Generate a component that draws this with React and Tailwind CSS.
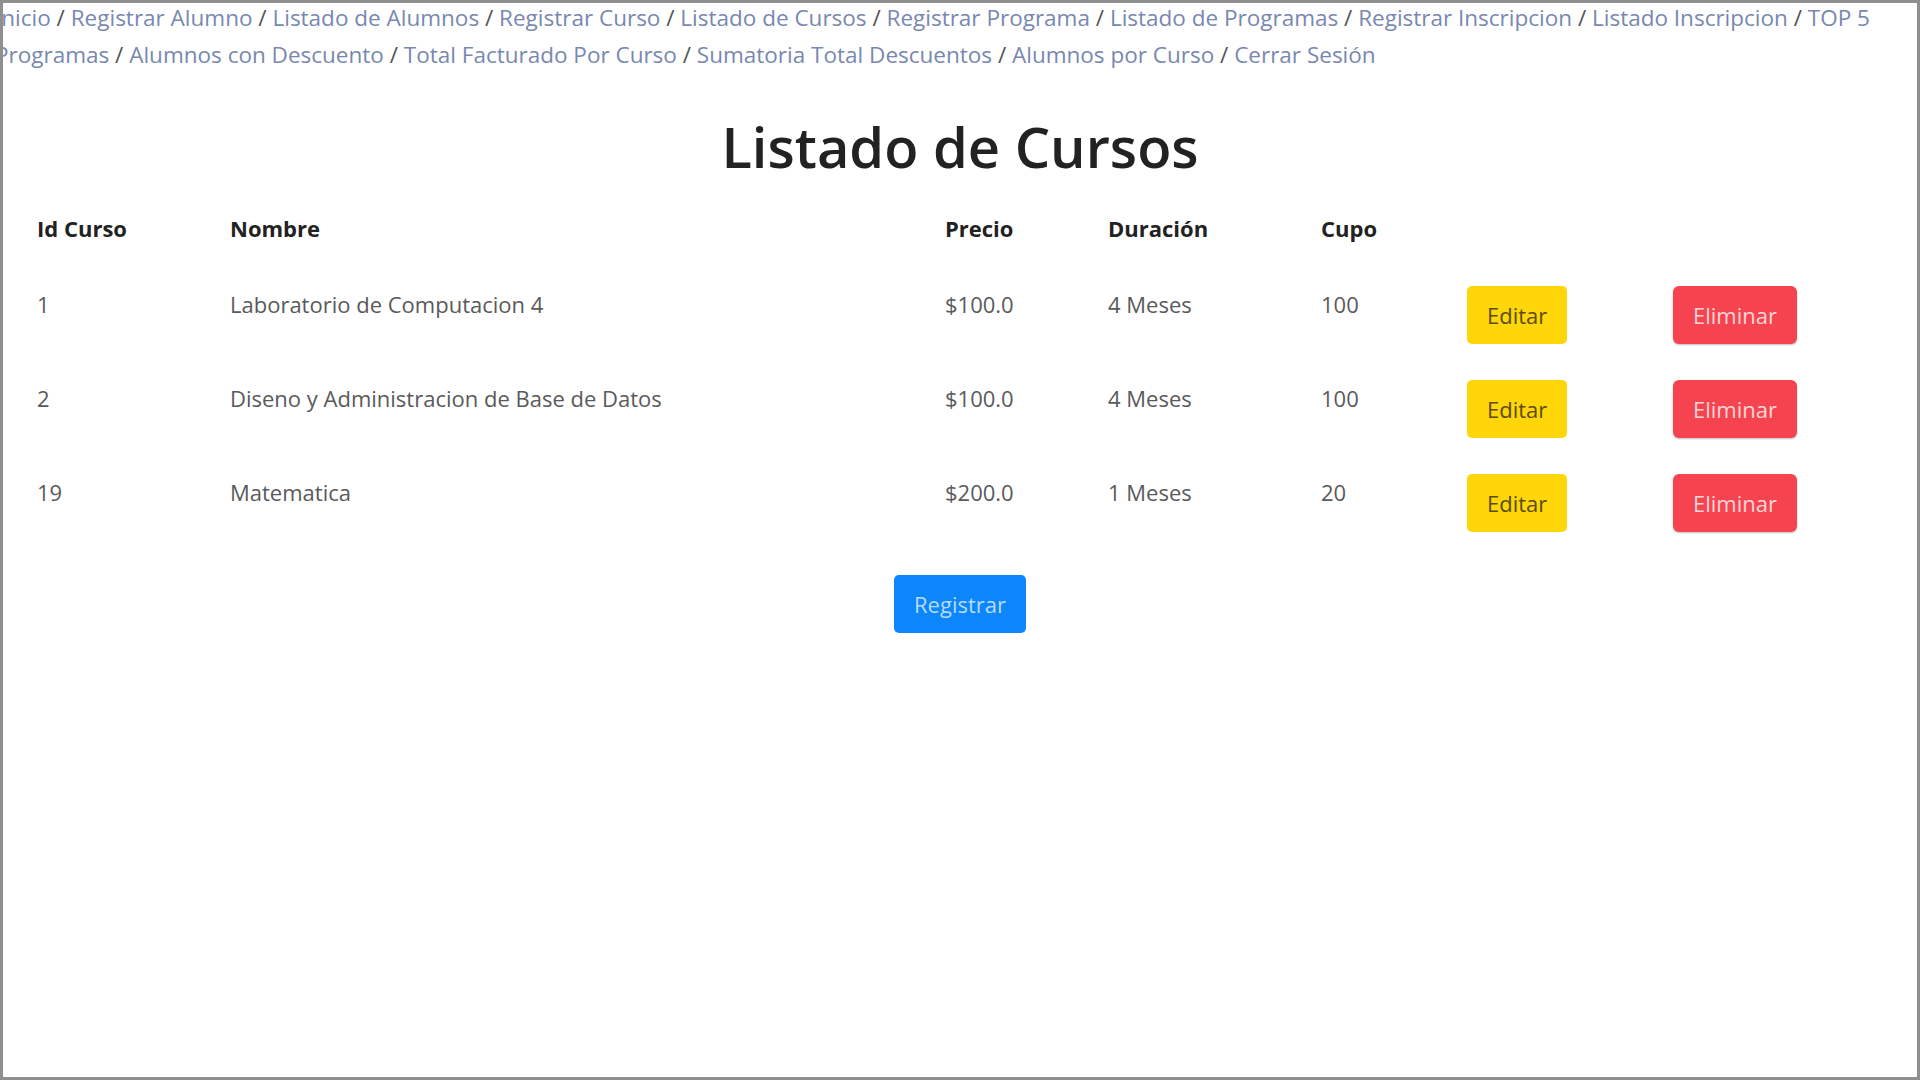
import React from "react";

const linksTop = [
  "Inicio",
  "Registrar Alumno",
  "Listado de Alumnos",
  "Registrar Curso",
  "Listado de Cursos",
  "Registrar Programa",
  "Listado de Programas",
  "Registrar Inscripcion",
  "Listado Inscripcion",
  "TOP 5",
];

const linksBottom = [
  "Programas",
  "Alumnos con Descuento",
  "Total Facturado Por Curso",
  "Sumatoria Total Descuentos",
  "Alumnos por Curso",
  "Cerrar Sesión",
];

const cursos = [
  { id: 1, nombre: "Laboratorio de Computacion 4", precio: "$100.0", duracion: "4 Meses", cupo: 100 },
  { id: 2, nombre: "Diseno y Administracion de Base de Datos", precio: "$100.0", duracion: "4 Meses", cupo: 100 },
  { id: 19, nombre: "Matematica", precio: "$200.0", duracion: "1 Meses", cupo: 20 },
];

// una linea del menu, el link "TOP 5 Programas" queda partido entre las dos
const NavLine = ({ items }) => (
  <div className="whitespace-nowrap h-[37px] leading-[37px]">
    {items.map((item, i) => (
      <span key={item}>
        {i > 0 && <span className="text-[#555]"> / </span>}
        <a className="text-[#7888b0]">{item}</a>
      </span>
    ))}
  </div>
);

export default function App() {
  return (
    <div
      className="w-[1920px] h-[1080px] border-[3px] border-[#8f8f8f] bg-white overflow-hidden text-[#222]"
      style={{ fontFamily: "'Open Sans', 'Noto Sans', sans-serif" }}
    >
      <nav className="text-[22.5px] ml-[-8px] mt-[-4px]">
        <NavLine items={linksTop} />
        <NavLine items={linksBottom} />
      </nav>

      <h1 className="text-center text-[56px] font-semibold leading-[72px] mt-[37px] text-[#222]">
        Listado de Cursos
      </h1>

      <table className="table-fixed mt-[10px] ml-[16px] w-[1890px] text-[22px]">
        <colgroup>
          <col className="w-[193px]" />
          <col className="w-[715px]" />
          <col className="w-[163px]" />
          <col className="w-[213px]" />
          <col className="w-[146px]" />
          <col className="w-[206px]" />
          <col />
        </colgroup>
        <thead>
          <tr className="text-left text-[#222]">
            <th className="px-[18px] pt-[18px] pb-[22px] leading-[36px] font-bold">Id Curso</th>
            <th className="px-[18px] pt-[18px] pb-[22px] leading-[36px] font-bold">Nombre</th>
            <th className="px-[18px] pt-[18px] pb-[22px] leading-[36px] font-bold">Precio</th>
            <th className="px-[18px] pt-[18px] pb-[22px] leading-[36px] font-bold">Duración</th>
            <th className="px-[18px] pt-[18px] pb-[22px] leading-[36px] font-bold">Cupo</th>
            <th className="p-[18px]"></th>
            <th className="p-[18px]"></th>
          </tr>
        </thead>
        <tbody className="text-[#5a5a5a]">
          {cursos.map((c) => (
            <tr key={c.id} className="align-top">
              <td className="p-[18px] leading-[36px]">{c.id}</td>
              <td className="p-[18px] leading-[36px]">{c.nombre}</td>
              <td className="p-[18px] leading-[36px]">{c.precio}</td>
              <td className="p-[18px] leading-[36px]">{c.duracion}</td>
              <td className="p-[18px] leading-[36px]">{c.cupo}</td>
              <td className="p-[18px]">
                <button className="h-[58px] px-[20px] rounded-[5px] bg-[#ffd60a] text-[#5c4c05] text-[22px]">
                  Editar
                </button>
              </td>
              <td className="p-[18px]">
                <button className="h-[58px] px-[20px] rounded-[6px] bg-[#f5444f] text-[#ffd6d8] text-[22px] shadow-[0_1px_2px_rgba(0,0,0,0.25)]">
                  Eliminar
                </button>
              </td>
            </tr>
          ))}
        </tbody>
      </table>

      <div className="flex justify-center mt-[25px]">
        <button className="h-[58px] px-[20px] rounded-[5px] bg-[#0d86fb] text-[#b5dcff] text-[22px]">
          Registrar
        </button>
      </div>
    </div>
  );
}
